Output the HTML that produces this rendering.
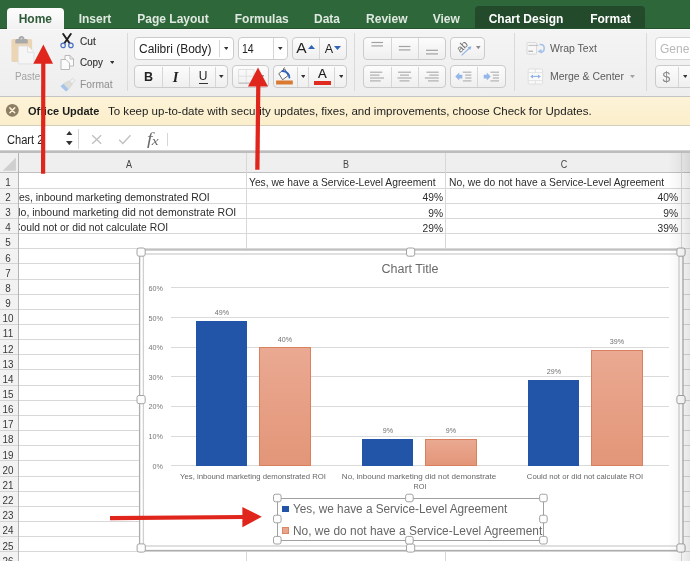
<!DOCTYPE html>
<html>
<head>
<meta charset="utf-8">
<title>Excel</title>
<style>
html,body{margin:0;padding:0;}
body{width:690px;height:561px;overflow:hidden;position:relative;background:#fff;font-family:"Liberation Sans",sans-serif;}
#root{position:absolute;left:0;top:0;width:690px;height:561px;will-change:transform;}
.a{position:absolute;}
.t{position:absolute;white-space:nowrap;line-height:1;transform-origin:0 50%;}
.c{position:absolute;white-space:nowrap;line-height:1;text-align:center;}
.r{position:absolute;white-space:nowrap;line-height:1;text-align:right;transform-origin:100% 50%;}
#tabbar{left:0;top:0;width:690px;height:29px;background:#2e6739;}
#hometab{left:7px;top:8px;width:56.5px;height:22px;background:linear-gradient(#fdfdfd,#f1f1f1);border-radius:4px 4px 0 0;}
#ctxtab{left:475px;top:6px;width:170px;height:23px;background:#224a2b;border-radius:4px 4px 0 0;}
.tab{font-weight:bold;font-size:12px;color:#dfe9e1;top:12px;}
#ribbon{left:0;top:29px;width:690px;height:68px;background:linear-gradient(#f4f4f4,#eeeeee);border-bottom:1px solid #c4c4c4;box-sizing:border-box;}
.vsep{width:1px;background:#dadada;top:33px;height:58px;}
.btn{background:linear-gradient(#fcfcfc,#efefef);border:1px solid #cbcbcb;border-radius:4px;box-sizing:border-box;}
.btn.w{background:#fff;}
.sb{-webkit-text-stroke:0.15px #333;}
.isep{width:1px;background:#d6d6d6;}
.rt{font-size:10px;color:#333;}
#msg{left:0;top:97px;width:690px;height:29px;background:linear-gradient(#fdf3d7,#fbeecb);border-bottom:1px solid #d2cdbb;box-sizing:border-box;}
#fbar{left:0;top:126px;width:690px;height:24px;background:#fff;}
#colhdr{left:0;top:153px;width:690px;height:20px;background:#efefef;border-bottom:1px solid #c0c0c0;box-sizing:border-box;}
#rowhdr{left:0;top:173px;width:19px;height:388px;background:#f2f2f2;border-right:1px solid #b4b4b4;box-sizing:border-box;}
.hl{left:0;width:690px;height:1px;background:#d8d8d8;}
.vl{width:1px;background:#d8d8d8;}
.rn{font-size:11px;color:#383838;left:0;width:15px;text-align:center;}
.cell{font-size:11px;color:#2c2c2c;}
#chart{left:141px;top:252px;width:540px;height:296px;background:#fff;border:1px solid #b5b5b5;box-sizing:border-box;}
.hd{background:#fbfbfb;border:1px solid #999;box-sizing:border-box;border-radius:2px;}
.gl{left:170px;width:498px;height:1px;background:#dadada;}
.yl{font-size:7.5px;color:#666;width:20px;text-align:right;left:143px;}
.dl{font-size:7.5px;color:#555;}
.bb{background:#2255a8;}
.bs{background:linear-gradient(#eaa992,#e39678);border:1px solid #d9805f;box-sizing:border-box;}
</style>
</head>
<body>
<div id="root">
<div class="a" id="tabbar"></div><div class="a" id="ctxtab"></div><div class="a" style="left:0;top:28px;width:690px;height:1px;background:#255330;"></div><div class="a" style="left:0;top:29px;width:690px;height:1px;background:#fafafa;z-index:1;"></div><div class="a" id="hometab"></div>
<div class="c tab" style="left:-24.700000000000003px;width:120px;top:18.5px;margin-top:-0.5em;color:#2f5b38;">Home</div>
<div class="c tab" style="left:35.0px;width:120px;top:18.5px;margin-top:-0.5em;">Insert</div>
<div class="c tab" style="left:113.0px;width:120px;top:18.5px;margin-top:-0.5em;">Page Layout</div>
<div class="c tab" style="left:201.8px;width:120px;top:18.5px;margin-top:-0.5em;">Formulas</div>
<div class="c tab" style="left:267.0px;width:120px;top:18.5px;margin-top:-0.5em;">Data</div>
<div class="c tab" style="left:326.8px;width:120px;top:18.5px;margin-top:-0.5em;">Review</div>
<div class="c tab" style="left:386.3px;width:120px;top:18.5px;margin-top:-0.5em;">View</div>
<div class="c tab" style="left:466.0px;width:120px;top:18.5px;margin-top:-0.5em;color:#fff;">Chart Design</div>
<div class="c tab" style="left:550.5px;width:120px;top:18.5px;margin-top:-0.5em;color:#fff;">Format</div>
<div class="a" id="ribbon"></div>
<div class="a vsep" style="left:127px"></div>
<div class="a vsep" style="left:354px"></div>
<div class="a vsep" style="left:514px"></div>
<div class="a vsep" style="left:646px"></div>
<svg class="a" style="left:10px;top:35px" width="26" height="30" viewBox="0 0 26 30">
<rect x="1.4" y="3.9" width="20.7" height="23.2" rx="1.6" fill="#ecd5b5"/>
<path d="M5.3 8.5 v-3 q0 -1.6 1.6 -1.6 h1.6 q0.4 -2.8 3 -2.8 q2.6 0 3 2.8 h1.7 q1.6 0 1.6 1.6 v3 z" fill="#a9a9a9"/>
<circle cx="11.5" cy="3.6" r="0.9" fill="#d9d9d9"/>
<path d="M8.2 11 h9.4 l6.3 6.2 v11.7 h-15.7 z" fill="#f5f5f5" stroke="#dadada" stroke-width="0.7"/>
<path d="M17.6 11 v6.2 h6.3" fill="#fafafa" stroke="#d4d4d4" stroke-width="0.7"/>
</svg>
<div class="t" style="left:14.7px;top:76px;margin-top:-0.5em;font-size:11px;transform:scaleX(0.8994);color:#a3a3a3;">Paste</div>
<svg class="a" style="left:59px;top:33px" width="16" height="16" viewBox="0 0 16 16">
<path d="M4.2 1 L10.6 10.2 M11.8 1 L5.4 10.2" stroke="#1d1d1d" stroke-width="1.9" fill="none" stroke-linecap="round"/>
<circle cx="4.1" cy="12.4" r="2.2" fill="#f1f1f1" stroke="#4a70c2" stroke-width="1.2"/>
<circle cx="11.9" cy="12.4" r="2.2" fill="#f1f1f1" stroke="#4a70c2" stroke-width="1.2"/>
</svg>
<div class="t rt sb" style="left:80px;top:41.5px;margin-top:-0.5em;font-size:10px;transform:scaleX(1.0089);">Cut</div>
<svg class="a" style="left:59px;top:54px" width="16" height="17" viewBox="0 0 16 17">
<path d="M6 1.5 h5 l3.5 3.5 v7 h-8.5 z" fill="#fbfbfb" stroke="#b3b3b3" stroke-width="0.9"/>
<path d="M11 1.5 v3.5 h3.5" fill="none" stroke="#b3b3b3" stroke-width="0.9"/>
<path d="M2 5.5 h5 l3.5 3.5 v6.5 h-8.5 z" fill="#fbfbfb" stroke="#b3b3b3" stroke-width="0.9"/>
</svg>
<div class="t rt sb" style="left:80px;top:63px;margin-top:-0.5em;font-size:10px;transform:scaleX(0.9852);">Copy</div>
<svg class="a" style="left:109.9px;top:61.0px" width="4.6" height="3" viewBox="0 0 4.6 3"><polygon points="0,0 4.6,0 2.3,3" fill="#333"/></svg>
<svg class="a" style="left:59px;top:77px" width="17" height="15" viewBox="0 0 17 15">
<path d="M10.5 4.2 L13.6 1.2 L16 3.6 L13 6.8 z" fill="#f0f0f0" stroke="#cfcfcf" stroke-width="0.7"/>
<path d="M4.5 6.8 L10 3.8 L13.3 7.2 L9.5 12.4 z" fill="#deded8" stroke="#cfcfcf" stroke-width="0.6"/>
<path d="M1.5 9.2 L4.5 6.8 L9.5 12.4 L7 14.4 z" fill="#a6c3e8"/>
</svg>
<div class="t rt" style="left:80px;top:84.5px;margin-top:-0.5em;font-size:10px;transform:scaleX(1.0294);color:#8e8e8e;">Format</div>
<div class="a btn w" style="left:134px;top:37px;width:99.5px;height:22.5px;"></div>
<div class="a isep" style="left:219px;top:40px;width:1px;height:17px;"></div>
<div class="t" style="left:139px;top:48.5px;margin-top:-0.5em;font-size:12px;transform:scaleX(0.9974);color:#222;">Calibri (Body)</div>
<svg class="a" style="left:223.89999999999998px;top:47.1px" width="4.6" height="3" viewBox="0 0 4.6 3"><polygon points="0,0 4.6,0 2.3,3" fill="#333"/></svg>
<div class="a btn w" style="left:237.5px;top:37px;width:50.0px;height:22.5px;"></div>
<div class="a isep" style="left:273px;top:38px;width:1px;height:20.5px;"></div>
<div class="t" style="left:241.7px;top:48.5px;margin-top:-0.5em;font-size:12px;transform:scaleX(0.8766);color:#222;">14</div>
<svg class="a" style="left:278.0px;top:47.3px" width="4.6" height="3" viewBox="0 0 4.6 3"><polygon points="0,0 4.6,0 2.3,3" fill="#333"/></svg>
<div class="a btn" style="left:291.5px;top:37px;width:55.0px;height:22.5px;"></div>
<div class="a isep" style="left:319px;top:38px;width:1px;height:20.5px;"></div>
<div class="t" style="left:296.3px;top:48px;margin-top:-0.5em;font-size:15.5px;color:#222;">A</div>
<svg class="a" style="left:308.0px;top:45.2px" width="7" height="4" viewBox="0 0 7 4"><polygon points="0,4 7,4 3.5,0" fill="#2e63b8"/></svg>
<div class="t" style="left:324.8px;top:49.3px;margin-top:-0.5em;font-size:12.5px;color:#222;">A</div>
<svg class="a" style="left:334.4px;top:46.4px" width="7" height="4" viewBox="0 0 7 4"><polygon points="0,0 7,0 3.5,4" fill="#2e63b8"/></svg>
<div class="a btn" style="left:134px;top:65px;width:93.5px;height:23px;"></div>
<div class="a isep" style="left:162px;top:66.5px;width:1px;height:20.5px;"></div>
<div class="a isep" style="left:189px;top:66.5px;width:1px;height:20.5px;"></div>
<div class="a isep" style="left:215px;top:66.5px;width:1px;height:20.5px;"></div>
<div class="c" style="left:138.5px;width:20px;top:77px;margin-top:-0.5em;font-size:12.5px;font-weight:bold;color:#222;">B</div>
<div class="c" style="left:165.6px;width:20px;top:76.8px;margin-top:-0.5em;font-size:14.5px;font-family:'Liberation Serif',serif;font-style:italic;font-weight:bold;color:#222;">I</div>
<div class="c" style="left:193.0px;width:20px;top:76.3px;margin-top:-0.5em;font-size:12px;color:#222;">U</div>
<div class="a a" style="left:198.5px;top:83px;width:9.0px;height:1px;background:#333;"></div>
<svg class="a" style="left:219.39999999999998px;top:75.1px" width="4.6" height="3" viewBox="0 0 4.6 3"><polygon points="0,0 4.6,0 2.3,3" fill="#333"/></svg>
<div class="a btn" style="left:232px;top:65px;width:37px;height:23px;"></div>
<svg class="a" style="left:238px;top:69px" width="18" height="16" viewBox="0 0 18 16"><path d="M0.5 0.5 h15.5 v13.5 h-15.5 z M0.5 7.2 h15.5 M8.2 0.5 v13.5" fill="none" stroke="#e0e0e0" stroke-width="1"/><path d="M0.5 14.2 h15.5" stroke="#bcbcbc" stroke-width="1.1"/></svg>
<svg class="a" style="left:259.7px;top:75.1px" width="4.6" height="3" viewBox="0 0 4.6 3"><polygon points="0,0 4.6,0 2.3,3" fill="#999"/></svg>
<div class="a btn" style="left:273px;top:65px;width:73.5px;height:23px;"></div>
<div class="a isep" style="left:297px;top:66.5px;width:1px;height:20.5px;"></div>
<div class="a isep" style="left:308px;top:66.5px;width:1px;height:20.5px;"></div>
<div class="a isep" style="left:334px;top:66.5px;width:1px;height:20.5px;"></div>
<svg class="a" style="left:276px;top:66px" width="18" height="19" viewBox="0 0 18 19">
<path d="M2.8 7.6 L8.8 2.9 L12 9.6 L6.6 13.8 z" fill="#fdfdfd" stroke="#5a5a5a" stroke-width="0.9" stroke-linejoin="round"/>
<path d="M8.6 1.6 q-1.6 0.4 -1 3" fill="none" stroke="#5a5a5a" stroke-width="1"/>
<path d="M6.4 5 q3.4 0.2 5.4 2.4 q1.8 2 1.6 4.2" fill="none" stroke="#2f62bd" stroke-width="1.8" stroke-linecap="round"/>
<rect x="0.1" y="14.5" width="16.7" height="4" fill="#d97a33"/>
</svg>
<svg class="a" style="left:300.7px;top:75.1px" width="4.6" height="3" viewBox="0 0 4.6 3"><polygon points="0,0 4.6,0 2.3,3" fill="#333"/></svg>
<div class="c" style="left:312.4px;width:20px;top:73.8px;margin-top:-0.5em;font-size:13px;color:#1a1a1a;-webkit-text-stroke:0.2px #1a1a1a;">A</div>
<div class="a a" style="left:314px;top:80.6px;width:16.600000000000023px;height:4.200000000000003px;background:#e02b20;"></div>
<svg class="a" style="left:338.5px;top:75.1px" width="4.6" height="3" viewBox="0 0 4.6 3"><polygon points="0,0 4.6,0 2.3,3" fill="#333"/></svg>
<div class="a btn" style="left:363px;top:37px;width:83px;height:22.5px;"></div>
<div class="a isep" style="left:390.5px;top:38px;width:1.0px;height:20.5px;"></div>
<div class="a isep" style="left:418px;top:38px;width:1px;height:20.5px;"></div>
<div class="a btn" style="left:450px;top:37px;width:35px;height:22.5px;"></div>
<svg class="a" style="left:452px;top:38px" width="26" height="21" viewBox="0 0 26 21">
<text x="0" y="0" font-family="Liberation Sans" font-size="10.5" fill="#707070" transform="translate(8.4,15.2) rotate(-45)">ab</text>
<path d="M9.6 17.4 L17.6 10" stroke="#8fb2e4" stroke-width="1.1"/><path d="M19.4 8.2 l-3.9 1 l2.8 2.9 z" fill="#8fb2e4"/>
</svg>
<svg class="a" style="left:476.4px;top:46.4px" width="4.6" height="3.2" viewBox="0 0 4.6 3.2"><polygon points="0,0 4.6,0 2.3,3.2" fill="#8a8a8a"/></svg>
<div class="a btn" style="left:363px;top:65px;width:83px;height:23px;"></div>
<div class="a isep" style="left:390.5px;top:66.5px;width:1.0px;height:20.5px;"></div>
<div class="a isep" style="left:418px;top:66.5px;width:1px;height:20.5px;"></div>
<div class="a btn" style="left:450px;top:65px;width:55.5px;height:23px;"></div>
<div class="a isep" style="left:477.4px;top:66.5px;width:1.0px;height:20.5px;"></div>
<svg class="a" style="left:455px;top:71px" width="8" height="11" viewBox="0 0 8 11"><path d="M0.3 5.6 L4.2 1.6 V3.7 H7.3 V7.5 H4.2 V9.6 z" fill="#94b6e8"/></svg>
<svg class="a" style="left:482.6px;top:71px" width="8" height="11" viewBox="0 0 8 11"><path d="M7.7 5.6 L3.8 1.6 V3.7 H0.7 V7.5 H3.8 V9.6 z" fill="#94b6e8"/></svg>
<svg class="a" style="left:526px;top:41px" width="21" height="15" viewBox="0 0 21 15">
<rect x="1" y="1.6" width="9.6" height="11.6" rx="1" fill="#f7f7f7" stroke="#d0d0d0" stroke-width="0.8"/>
<path d="M2.4 4.4 h10" stroke="#bdbdbd" stroke-width="1"/><path d="M2.4 10.2 h4.6" stroke="#9e9e9e" stroke-width="1"/>
<path d="M13.6 3.6 q4.6 -0.6 4.6 3.6 q0 3.6 -3.2 4" fill="none" stroke="#a4c0ea" stroke-width="1.5"/><path d="M11.4 10.4 l4 -2.4 l0.6 4.4 z" fill="#a4c0ea"/>
</svg>
<div class="t rt" style="left:549.5px;top:48.5px;margin-top:-0.5em;font-size:10px;transform:scaleX(1.0482);color:#5a5a5a;">Wrap Text</div>
<svg class="a" style="left:527px;top:67.5px" width="17" height="17" viewBox="0 0 17 17">
<rect x="1.2" y="1" width="14.4" height="15" rx="1" fill="#fafafa" stroke="#d9d9d9" stroke-width="0.8"/>
<path d="M1.2 4.6 h14.4 M1.2 12.6 h14.4 M8.4 1 v3.6 M8.4 12.6 v3.4" stroke="#e0e0e0" stroke-width="0.9"/>
<path d="M5 8.4 h7" stroke="#8fb2e4" stroke-width="1.1"/><path d="M3.2 8.4 l2.8 -2 v4 z M13.8 8.4 l-2.8 -2 v4 z" fill="#8fb2e4"/>
</svg>
<div class="t rt" style="left:549.5px;top:76.8px;margin-top:-0.5em;font-size:10px;transform:scaleX(1.0469);color:#5a5a5a;">Merge &amp; Center</div>
<svg class="a" style="left:630.4px;top:75.10000000000001px" width="4.8" height="3.2" viewBox="0 0 4.8 3.2"><polygon points="0,0 4.8,0 2.4,3.2" fill="#a2a2a2"/></svg>
<div class="a btn w" style="left:655px;top:37px;width:45px;height:22.5px;border-color:#d6d6d6;"></div>
<div class="t" style="left:660px;top:48.5px;margin-top:-0.5em;font-size:12px;color:#b8b8b8;">Gener</div>
<div class="a btn" style="left:655px;top:65px;width:45px;height:23px;"></div>
<div class="c" style="left:656.3px;width:20px;top:77px;margin-top:-0.5em;font-size:14px;color:#8a8a8a;">$</div>
<div class="a isep" style="left:677.5px;top:66.5px;width:1.0px;height:20.5px;"></div>
<svg class="a" style="left:682.5px;top:75.1px" width="4.6" height="3" viewBox="0 0 4.6 3"><polygon points="0,0 4.6,0 2.3,3" fill="#333"/></svg>
<svg class="a" style="left:0;top:0" width="690" height="100" viewBox="0 0 690 100"><rect x="371.4" y="41.9" width="11.6" height="1.2" fill="#a2a2a2"/><rect x="371.4" y="45.3" width="11.6" height="1.2" fill="#a2a2a2"/><rect x="398.8" y="45.9" width="11.6" height="1.2" fill="#a2a2a2"/><rect x="398.8" y="49.3" width="11.6" height="1.2" fill="#a2a2a2"/><rect x="426" y="49.7" width="12" height="1.2" fill="#a2a2a2"/><rect x="426" y="53.3" width="12" height="1.2" fill="#a2a2a2"/><rect x="370" y="71.65" width="12.3" height="1.1" fill="#a8a8a8"/><rect x="370" y="74.55" width="9.5" height="1.1" fill="#a8a8a8"/><rect x="370" y="77.45" width="14" height="1.1" fill="#a8a8a8"/><rect x="370" y="80.35" width="10.7" height="1.1" fill="#a8a8a8"/><rect x="398" y="71.65" width="13" height="1.1" fill="#a8a8a8"/><rect x="400" y="74.55" width="9" height="1.1" fill="#a8a8a8"/><rect x="397.5" y="77.45" width="14.0" height="1.1" fill="#a8a8a8"/><rect x="399.5" y="80.35" width="10.0" height="1.1" fill="#a8a8a8"/><rect x="426.5" y="71.65" width="12.2" height="1.1" fill="#a8a8a8"/><rect x="429.3" y="74.55" width="9.4" height="1.1" fill="#a8a8a8"/><rect x="424.8" y="77.45" width="13.9" height="1.1" fill="#a8a8a8"/><rect x="428" y="80.35" width="10.7" height="1.1" fill="#a8a8a8"/><rect x="462.8" y="71.6" width="8.6" height="1.2" fill="#b2b2b2"/><rect x="465.2" y="74.5" width="6.2" height="1.2" fill="#b2b2b2"/><rect x="465.2" y="77.4" width="6.2" height="1.2" fill="#b2b2b2"/><rect x="462.8" y="80.3" width="8.6" height="1.2" fill="#b2b2b2"/><rect x="490.4" y="71.6" width="8.6" height="1.2" fill="#b2b2b2"/><rect x="492.8" y="74.5" width="6.2" height="1.2" fill="#b2b2b2"/><rect x="492.8" y="77.4" width="6.2" height="1.2" fill="#b2b2b2"/><rect x="490.4" y="80.3" width="8.6" height="1.2" fill="#b2b2b2"/></svg>
<div class="a" id="msg"></div>
<svg class="a" style="left:5px;top:102.7px" width="15" height="15" viewBox="0 0 15 15"><circle cx="7.3" cy="7.3" r="6.4" fill="#8b7e65"/><path d="M4.9 4.9 L9.7 9.7 M9.7 4.9 L4.9 9.7" stroke="#fcf1d1" stroke-width="1.5" stroke-linecap="round"/></svg>
<div class="t" style="left:28px;top:111.7px;margin-top:-0.5em;font-size:11px;transform:scaleX(0.997);font-weight:bold;color:#1c1c1c;">Office Update</div>
<div class="t" style="left:108.4px;top:111.7px;margin-top:-0.5em;font-size:11.5px;transform:scaleX(1.0021);color:#1c1c1c;">To keep up-to-date with security updates, fixes, and improvements, choose Check for Updates.</div>
<div class="a" id="fbar"></div>
<div class="t" style="left:6.8px;top:139.7px;margin-top:-0.5em;font-size:12px;transform:scaleX(0.925);color:#222;">Chart 2</div>
<svg class="a" style="left:66.0px;top:131.15px" width="6.6" height="4.3" viewBox="0 0 6.6 4.3"><polygon points="0,4.3 6.6,4.3 3.3,0" fill="#333"/></svg>
<svg class="a" style="left:66.0px;top:141.04999999999998px" width="6.6" height="4.3" viewBox="0 0 6.6 4.3"><polygon points="0,0 6.6,0 3.3,4.3" fill="#333"/></svg>
<div class="a isep" style="left:78px;top:129px;width:1px;height:20px;"></div>
<svg class="a" style="left:91px;top:134px" width="11.5" height="11" viewBox="0 0 11.5 11"><path d="M1.2 1.2 L10.2 9.8 M10.2 1.2 L1.2 9.8" stroke="#c0c0c0" stroke-width="1.4"/></svg>
<svg class="a" style="left:118px;top:134px" width="14" height="11" viewBox="0 0 14 11"><path d="M1.2 5.8 L4.8 9.5 L12.5 1.2" stroke="#c0c0c0" stroke-width="1.4" fill="none"/></svg>
<div class="t" style="left:147px;top:138px;margin-top:-0.5em;font-size:17px;font-family:'Liberation Serif',serif;color:#6a6a6a;transform:scaleX(1.15);"><i>f</i><span style="font-size:13.5px;font-style:italic;position:relative;top:1px;left:-0.5px;">x</span></div>
<div class="a isep" style="left:167px;top:132.5px;width:1px;height:13.0px;"></div>
<div class="a" style="left:0;top:150px;width:690px;height:3px;background:linear-gradient(#e2e2e2 0%,#bdbdbd 40%,#bdbdbd 100%);"></div>
<div class="a" id="colhdr"></div><div class="a" id="rowhdr"></div>
<svg class="a" style="left:2px;top:157px" width="15" height="15" viewBox="0 0 15 15"><polygon points="13.9,0.4 13.9,13.7 0.7,13.7" fill="#cfcfcf"/></svg>
<div class="a vl" style="left:246px;top:153px;width:1px;height:408px;"></div>
<div class="a vl" style="left:445px;top:153px;width:1px;height:408px;"></div>
<div class="a vl" style="left:681px;top:153px;width:1px;height:408px;"></div>
<div class="a a" style="left:18px;top:153px;width:1px;height:20px;background:#b4b4b4;"></div>
<div class="c" style="left:119.0px;width:20px;top:164.6px;margin-top:-0.5em;font-size:10px;color:#444;transform:scaleX(0.9);">A</div>
<div class="c" style="left:336.0px;width:20px;top:164.6px;margin-top:-0.5em;font-size:10px;color:#444;transform:scaleX(0.9);">B</div>
<div class="c" style="left:553.5px;width:20px;top:164.6px;margin-top:-0.5em;font-size:10px;color:#444;transform:scaleX(0.9);">C</div>
<div class="a hl" style="left:19px;top:188px;width:671px;height:1px;"></div>
<div class="a hl" style="left:0px;top:188px;width:18px;height:1px;background:#d4d4d4;"></div>
<div class="a hl" style="left:19px;top:203px;width:671px;height:1px;"></div>
<div class="a hl" style="left:0px;top:203px;width:18px;height:1px;background:#d4d4d4;"></div>
<div class="a hl" style="left:19px;top:218px;width:671px;height:1px;"></div>
<div class="a hl" style="left:0px;top:218px;width:18px;height:1px;background:#d4d4d4;"></div>
<div class="a hl" style="left:19px;top:233px;width:671px;height:1px;"></div>
<div class="a hl" style="left:0px;top:233px;width:18px;height:1px;background:#d4d4d4;"></div>
<div class="a hl" style="left:19px;top:248px;width:671px;height:1px;"></div>
<div class="a hl" style="left:0px;top:248px;width:18px;height:1px;background:#d4d4d4;"></div>
<div class="a hl" style="left:19px;top:263px;width:671px;height:1px;"></div>
<div class="a hl" style="left:0px;top:263px;width:18px;height:1px;background:#d4d4d4;"></div>
<div class="a hl" style="left:19px;top:279px;width:671px;height:1px;"></div>
<div class="a hl" style="left:0px;top:279px;width:18px;height:1px;background:#d4d4d4;"></div>
<div class="a hl" style="left:19px;top:294px;width:671px;height:1px;"></div>
<div class="a hl" style="left:0px;top:294px;width:18px;height:1px;background:#d4d4d4;"></div>
<div class="a hl" style="left:19px;top:309px;width:671px;height:1px;"></div>
<div class="a hl" style="left:0px;top:309px;width:18px;height:1px;background:#d4d4d4;"></div>
<div class="a hl" style="left:19px;top:324px;width:671px;height:1px;"></div>
<div class="a hl" style="left:0px;top:324px;width:18px;height:1px;background:#d4d4d4;"></div>
<div class="a hl" style="left:19px;top:339px;width:671px;height:1px;"></div>
<div class="a hl" style="left:0px;top:339px;width:18px;height:1px;background:#d4d4d4;"></div>
<div class="a hl" style="left:19px;top:354px;width:671px;height:1px;"></div>
<div class="a hl" style="left:0px;top:354px;width:18px;height:1px;background:#d4d4d4;"></div>
<div class="a hl" style="left:19px;top:369px;width:671px;height:1px;"></div>
<div class="a hl" style="left:0px;top:369px;width:18px;height:1px;background:#d4d4d4;"></div>
<div class="a hl" style="left:19px;top:385px;width:671px;height:1px;"></div>
<div class="a hl" style="left:0px;top:385px;width:18px;height:1px;background:#d4d4d4;"></div>
<div class="a hl" style="left:19px;top:400px;width:671px;height:1px;"></div>
<div class="a hl" style="left:0px;top:400px;width:18px;height:1px;background:#d4d4d4;"></div>
<div class="a hl" style="left:19px;top:415px;width:671px;height:1px;"></div>
<div class="a hl" style="left:0px;top:415px;width:18px;height:1px;background:#d4d4d4;"></div>
<div class="a hl" style="left:19px;top:430px;width:671px;height:1px;"></div>
<div class="a hl" style="left:0px;top:430px;width:18px;height:1px;background:#d4d4d4;"></div>
<div class="a hl" style="left:19px;top:445px;width:671px;height:1px;"></div>
<div class="a hl" style="left:0px;top:445px;width:18px;height:1px;background:#d4d4d4;"></div>
<div class="a hl" style="left:19px;top:460px;width:671px;height:1px;"></div>
<div class="a hl" style="left:0px;top:460px;width:18px;height:1px;background:#d4d4d4;"></div>
<div class="a hl" style="left:19px;top:476px;width:671px;height:1px;"></div>
<div class="a hl" style="left:0px;top:476px;width:18px;height:1px;background:#d4d4d4;"></div>
<div class="a hl" style="left:19px;top:491px;width:671px;height:1px;"></div>
<div class="a hl" style="left:0px;top:491px;width:18px;height:1px;background:#d4d4d4;"></div>
<div class="a hl" style="left:19px;top:506px;width:671px;height:1px;"></div>
<div class="a hl" style="left:0px;top:506px;width:18px;height:1px;background:#d4d4d4;"></div>
<div class="a hl" style="left:19px;top:521px;width:671px;height:1px;"></div>
<div class="a hl" style="left:0px;top:521px;width:18px;height:1px;background:#d4d4d4;"></div>
<div class="a hl" style="left:19px;top:536px;width:671px;height:1px;"></div>
<div class="a hl" style="left:0px;top:536px;width:18px;height:1px;background:#d4d4d4;"></div>
<div class="a hl" style="left:19px;top:551px;width:671px;height:1px;"></div>
<div class="a hl" style="left:0px;top:551px;width:18px;height:1px;background:#d4d4d4;"></div>
<div class="a hl" style="left:19px;top:566px;width:671px;height:1px;"></div>
<div class="a hl" style="left:0px;top:566px;width:18px;height:1px;background:#d4d4d4;"></div>
<div class="c rn" style="left:-1.4000000000000004px;width:18px;top:182.12699999999998px;margin-top:-0.5em;font-size:10.5px;transform:scaleX(0.94);">1</div>
<div class="c rn" style="left:-1.4000000000000004px;width:18px;top:197.28099999999998px;margin-top:-0.5em;font-size:10.5px;transform:scaleX(0.94);">2</div>
<div class="c rn" style="left:-1.4000000000000004px;width:18px;top:212.43499999999997px;margin-top:-0.5em;font-size:10.5px;transform:scaleX(0.94);">3</div>
<div class="c rn" style="left:-1.4000000000000004px;width:18px;top:227.58899999999997px;margin-top:-0.5em;font-size:10.5px;transform:scaleX(0.94);">4</div>
<div class="c rn" style="left:-1.4000000000000004px;width:18px;top:242.74299999999997px;margin-top:-0.5em;font-size:10.5px;transform:scaleX(0.94);">5</div>
<div class="c rn" style="left:-1.4000000000000004px;width:18px;top:257.897px;margin-top:-0.5em;font-size:10.5px;transform:scaleX(0.94);">6</div>
<div class="c rn" style="left:-1.4000000000000004px;width:18px;top:273.05100000000004px;margin-top:-0.5em;font-size:10.5px;transform:scaleX(0.94);">7</div>
<div class="c rn" style="left:-1.4000000000000004px;width:18px;top:288.20500000000004px;margin-top:-0.5em;font-size:10.5px;transform:scaleX(0.94);">8</div>
<div class="c rn" style="left:-1.4000000000000004px;width:18px;top:303.35900000000004px;margin-top:-0.5em;font-size:10.5px;transform:scaleX(0.94);">9</div>
<div class="c rn" style="left:-1.4000000000000004px;width:18px;top:318.51300000000003px;margin-top:-0.5em;font-size:10.5px;transform:scaleX(0.94);">10</div>
<div class="c rn" style="left:-1.4000000000000004px;width:18px;top:333.66700000000003px;margin-top:-0.5em;font-size:10.5px;transform:scaleX(0.94);">11</div>
<div class="c rn" style="left:-1.4000000000000004px;width:18px;top:348.821px;margin-top:-0.5em;font-size:10.5px;transform:scaleX(0.94);">12</div>
<div class="c rn" style="left:-1.4000000000000004px;width:18px;top:363.975px;margin-top:-0.5em;font-size:10.5px;transform:scaleX(0.94);">13</div>
<div class="c rn" style="left:-1.4000000000000004px;width:18px;top:379.129px;margin-top:-0.5em;font-size:10.5px;transform:scaleX(0.94);">14</div>
<div class="c rn" style="left:-1.4000000000000004px;width:18px;top:394.283px;margin-top:-0.5em;font-size:10.5px;transform:scaleX(0.94);">15</div>
<div class="c rn" style="left:-1.4000000000000004px;width:18px;top:409.437px;margin-top:-0.5em;font-size:10.5px;transform:scaleX(0.94);">16</div>
<div class="c rn" style="left:-1.4000000000000004px;width:18px;top:424.591px;margin-top:-0.5em;font-size:10.5px;transform:scaleX(0.94);">17</div>
<div class="c rn" style="left:-1.4000000000000004px;width:18px;top:439.745px;margin-top:-0.5em;font-size:10.5px;transform:scaleX(0.94);">18</div>
<div class="c rn" style="left:-1.4000000000000004px;width:18px;top:454.899px;margin-top:-0.5em;font-size:10.5px;transform:scaleX(0.94);">19</div>
<div class="c rn" style="left:-1.4000000000000004px;width:18px;top:470.053px;margin-top:-0.5em;font-size:10.5px;transform:scaleX(0.94);">20</div>
<div class="c rn" style="left:-1.4000000000000004px;width:18px;top:485.207px;margin-top:-0.5em;font-size:10.5px;transform:scaleX(0.94);">21</div>
<div class="c rn" style="left:-1.4000000000000004px;width:18px;top:500.361px;margin-top:-0.5em;font-size:10.5px;transform:scaleX(0.94);">22</div>
<div class="c rn" style="left:-1.4000000000000004px;width:18px;top:515.515px;margin-top:-0.5em;font-size:10.5px;transform:scaleX(0.94);">23</div>
<div class="c rn" style="left:-1.4000000000000004px;width:18px;top:530.669px;margin-top:-0.5em;font-size:10.5px;transform:scaleX(0.94);">24</div>
<div class="c rn" style="left:-1.4000000000000004px;width:18px;top:545.823px;margin-top:-0.5em;font-size:10.5px;transform:scaleX(0.94);">25</div>
<div class="c rn" style="left:-1.4000000000000004px;width:18px;top:560.977px;margin-top:-0.5em;font-size:10.5px;transform:scaleX(0.94);">26</div>
<div class="a" style="left:19px;top:175px;width:227px;height:60px;overflow:hidden;">
<div class="t cell" style="left:-5.699999999999999px;top:22.58099999999999px;margin-top:-0.5em;transform:scaleX(0.948);">Yes, inbound marketing demonstrated ROI</div>
<div class="t cell" style="left:-5.699999999999999px;top:37.734999999999985px;margin-top:-0.5em;transform:scaleX(0.956);">No, inbound marketing did not demonstrate ROI</div>
<div class="t cell" style="left:-5.699999999999999px;top:52.88899999999998px;margin-top:-0.5em;transform:scaleX(0.9395);">Could not or did not calculate ROI</div>
</div>
<div class="t cell" style="left:248.5px;top:182.427px;margin-top:-0.5em;transform:scaleX(0.9318);">Yes, we have a Service-Level Agreement</div>
<div class="t cell" style="left:448.5px;top:182.427px;margin-top:-0.5em;transform:scaleX(0.9351);">No, we do not have a Service-Level Agreement</div>
<div class="r cell" style="left:142.8px;width:300px;top:197.981px;margin-top:-0.5em;transform:scaleX(0.93);">49%</div>
<div class="r cell" style="left:378px;width:300px;top:197.981px;margin-top:-0.5em;transform:scaleX(0.93);">40%</div>
<div class="r cell" style="left:142.8px;width:300px;top:213.135px;margin-top:-0.5em;transform:scaleX(0.93);">9%</div>
<div class="r cell" style="left:378px;width:300px;top:213.135px;margin-top:-0.5em;transform:scaleX(0.93);">9%</div>
<div class="r cell" style="left:142.8px;width:300px;top:228.289px;margin-top:-0.5em;transform:scaleX(0.93);">29%</div>
<div class="r cell" style="left:378px;width:300px;top:228.289px;margin-top:-0.5em;transform:scaleX(0.93);">39%</div>
<svg class="a" style="left:0;top:0" width="690" height="561" viewBox="0 0 690 561"><rect x="139.6" y="249.9" width="543.4" height="300.6" fill="#fff" stroke="#adadad" stroke-width="1.3"/><rect x="143.4" y="254" width="535.6" height="292" fill="none" stroke="#cfcfcf" stroke-width="1.3"/></svg>
<div class="c" style="left:310.0px;width:200px;top:269px;margin-top:-0.5em;font-size:12px;color:#6a6a6a;transform:scaleX(1.045);">Chart Title</div>
<div class="a gl" style="left:171px;top:465px;width:497.6px;height:1px;left:171px;width:497.6px;"></div>
<div class="r" style="left:122.80000000000001px;width:40px;top:466.6px;margin-top:-0.5em;font-size:7.7px;transform:scaleX(0.94);color:#777;">0%</div>
<div class="a gl" style="left:171px;top:436px;width:497.6px;height:1px;left:171px;width:497.6px;"></div>
<div class="r" style="left:122.80000000000001px;width:40px;top:436.95000000000005px;margin-top:-0.5em;font-size:7.7px;transform:scaleX(0.94);color:#777;">10%</div>
<div class="a gl" style="left:171px;top:406px;width:497.6px;height:1px;left:171px;width:497.6px;"></div>
<div class="r" style="left:122.80000000000001px;width:40px;top:407.3px;margin-top:-0.5em;font-size:7.7px;transform:scaleX(0.94);color:#777;">20%</div>
<div class="a gl" style="left:171px;top:376px;width:497.6px;height:1px;left:171px;width:497.6px;"></div>
<div class="r" style="left:122.80000000000001px;width:40px;top:377.65000000000003px;margin-top:-0.5em;font-size:7.7px;transform:scaleX(0.94);color:#777;">30%</div>
<div class="a gl" style="left:171px;top:347px;width:497.6px;height:1px;left:171px;width:497.6px;"></div>
<div class="r" style="left:122.80000000000001px;width:40px;top:348.00000000000006px;margin-top:-0.5em;font-size:7.7px;transform:scaleX(0.94);color:#777;">40%</div>
<div class="a gl" style="left:171px;top:317px;width:497.6px;height:1px;left:171px;width:497.6px;"></div>
<div class="r" style="left:122.80000000000001px;width:40px;top:318.35px;margin-top:-0.5em;font-size:7.7px;transform:scaleX(0.94);color:#777;">50%</div>
<div class="a gl" style="left:171px;top:287px;width:497.6px;height:1px;left:171px;width:497.6px;"></div>
<div class="r" style="left:122.80000000000001px;width:40px;top:288.70000000000005px;margin-top:-0.5em;font-size:7.7px;transform:scaleX(0.94);color:#777;">60%</div>
<div class="a bb" style="left:196px;top:321px;width:51px;height:145px;"></div>
<div class="c" style="left:201.5px;width:40px;top:313.3px;margin-top:-0.5em;font-size:7.7px;color:#707070;transform:scaleX(0.93);">49%</div>
<div class="a bs" style="left:259px;top:347px;width:52px;height:119px;"></div>
<div class="c" style="left:265.0px;width:40px;top:339.40000000000003px;margin-top:-0.5em;font-size:7.7px;color:#707070;transform:scaleX(0.93);">40%</div>
<div class="a bb" style="left:362px;top:439px;width:51px;height:27px;"></div>
<div class="c" style="left:367.5px;width:40px;top:431.21500000000003px;margin-top:-0.5em;font-size:7.7px;color:#707070;transform:scaleX(0.93);">9%</div>
<div class="a bs" style="left:425px;top:439px;width:52px;height:27px;"></div>
<div class="c" style="left:431.0px;width:40px;top:431.21500000000003px;margin-top:-0.5em;font-size:7.7px;color:#707070;transform:scaleX(0.93);">9%</div>
<div class="a bb" style="left:528px;top:380px;width:51px;height:86px;"></div>
<div class="c" style="left:533.5px;width:40px;top:371.9150000000001px;margin-top:-0.5em;font-size:7.7px;color:#707070;transform:scaleX(0.93);">29%</div>
<div class="a bs" style="left:591px;top:350px;width:52px;height:116px;"></div>
<div class="c" style="left:597.0px;width:40px;top:342.26500000000004px;margin-top:-0.5em;font-size:7.7px;color:#707070;transform:scaleX(0.93);">39%</div>
<div class="c" style="left:143.3px;width:220px;top:477.3px;margin-top:-0.5em;font-size:7.7px;color:#666;transform:scaleX(1.0066);">Yes, inbound marketing demonstrated ROI</div>
<div class="c" style="left:309.2px;width:220px;top:477.3px;margin-top:-0.5em;font-size:7.7px;color:#666;transform:scaleX(1.0469);">No, inbound marketing did not demonstrate</div>
<div class="c" style="left:309.6px;width:220px;top:487.3px;margin-top:-0.5em;font-size:7.7px;color:#666;transform:scaleX(0.9496);">ROI</div>
<div class="c" style="left:474.79999999999995px;width:220px;top:477.3px;margin-top:-0.5em;font-size:7.7px;color:#666;transform:scaleX(1.0081);">Could not or did not calculate ROI</div>
<div class="a a" style="left:277px;top:498px;width:267px;height:43px;border:1px solid #a0a0a0;box-sizing:border-box;background:#fff;"></div>
<div class="a a" style="left:282.4px;top:505.6px;width:6.600000000000023px;height:6.7999999999999545px;background:#2255a8;"></div>
<div class="a a" style="left:282.4px;top:527px;width:6.600000000000023px;height:7px;background:#e9a58b;border:1px solid #dc8666;box-sizing:border-box;"></div>
<div class="t" style="left:292.8px;top:509px;margin-top:-0.5em;font-size:12px;transform:scaleX(0.9814);color:#666;">Yes, we have a Service-Level Agreement</div>
<div class="t" style="left:292.8px;top:530.8px;margin-top:-0.5em;font-size:12px;transform:scaleX(0.9936);color:#666;">No, we do not have a Service-Level Agreement</div>
<svg class="a" style="left:0;top:0" width="690" height="561" viewBox="0 0 690 561"><rect x="137.0" y="248.0" width="8.2" height="8.2" rx="2" fill="#fdfdfd" stroke="#a3a3a3" stroke-width="1"/><rect x="406.5" y="248.0" width="8.2" height="8.2" rx="2" fill="#fdfdfd" stroke="#a3a3a3" stroke-width="1"/><rect x="676.9" y="248.0" width="8.2" height="8.2" rx="2" fill="#fdfdfd" stroke="#a3a3a3" stroke-width="1"/><rect x="137.0" y="395.5" width="8.2" height="8.2" rx="2" fill="#fdfdfd" stroke="#a3a3a3" stroke-width="1"/><rect x="676.9" y="395.5" width="8.2" height="8.2" rx="2" fill="#fdfdfd" stroke="#a3a3a3" stroke-width="1"/><rect x="137.1" y="543.9" width="8.2" height="8.2" rx="2" fill="#fdfdfd" stroke="#a3a3a3" stroke-width="1"/><rect x="406.5" y="543.9" width="8.2" height="8.2" rx="2" fill="#fdfdfd" stroke="#a3a3a3" stroke-width="1"/><rect x="676.9" y="543.9" width="8.2" height="8.2" rx="2" fill="#fdfdfd" stroke="#a3a3a3" stroke-width="1"/><rect x="273.5" y="494.2" width="7.6" height="7.6" rx="2" fill="#fdfdfd" stroke="#a3a3a3" stroke-width="1"/><rect x="405.6" y="494.2" width="7.6" height="7.6" rx="2" fill="#fdfdfd" stroke="#a3a3a3" stroke-width="1"/><rect x="539.6" y="494.2" width="7.6" height="7.6" rx="2" fill="#fdfdfd" stroke="#a3a3a3" stroke-width="1"/><rect x="273.5" y="515.2" width="7.6" height="7.6" rx="2" fill="#fdfdfd" stroke="#a3a3a3" stroke-width="1"/><rect x="539.6" y="515.2" width="7.6" height="7.6" rx="2" fill="#fdfdfd" stroke="#a3a3a3" stroke-width="1"/><rect x="273.5" y="536.4" width="7.6" height="7.6" rx="2" fill="#fdfdfd" stroke="#a3a3a3" stroke-width="1"/><rect x="405.6" y="536.4" width="7.6" height="7.6" rx="2" fill="#fdfdfd" stroke="#a3a3a3" stroke-width="1"/><rect x="539.6" y="536.4" width="7.6" height="7.6" rx="2" fill="#fdfdfd" stroke="#a3a3a3" stroke-width="1"/></svg>
<div class="a a" style="left:668px;top:153px;width:22px;height:408px;background:linear-gradient(90deg,rgba(0,0,0,0),rgba(0,0,0,0.04) 55%,rgba(0,0,0,0.10));"></div>
<svg class="a" style="left:0;top:0" width="690" height="561" viewBox="0 0 690 561"><g fill="#e0261c">
<polygon points="41.2,62 45.4,62 45.2,173.7 41,173.7"/><polygon points="43.4,44.4 53,63.8 33.3,63.8"/>
<polygon points="256.2,85 260.4,85 259.5,169.8 255.2,169.8"/><polygon points="258,67.6 268,86.6 248,86.6"/>
<polygon points="110,516 244,514.9 244,519.1 110,520.2"/><polygon points="261.8,516.8 242.4,507 242.4,527.2"/>
</g></svg>
</div>
</body>
</html>
